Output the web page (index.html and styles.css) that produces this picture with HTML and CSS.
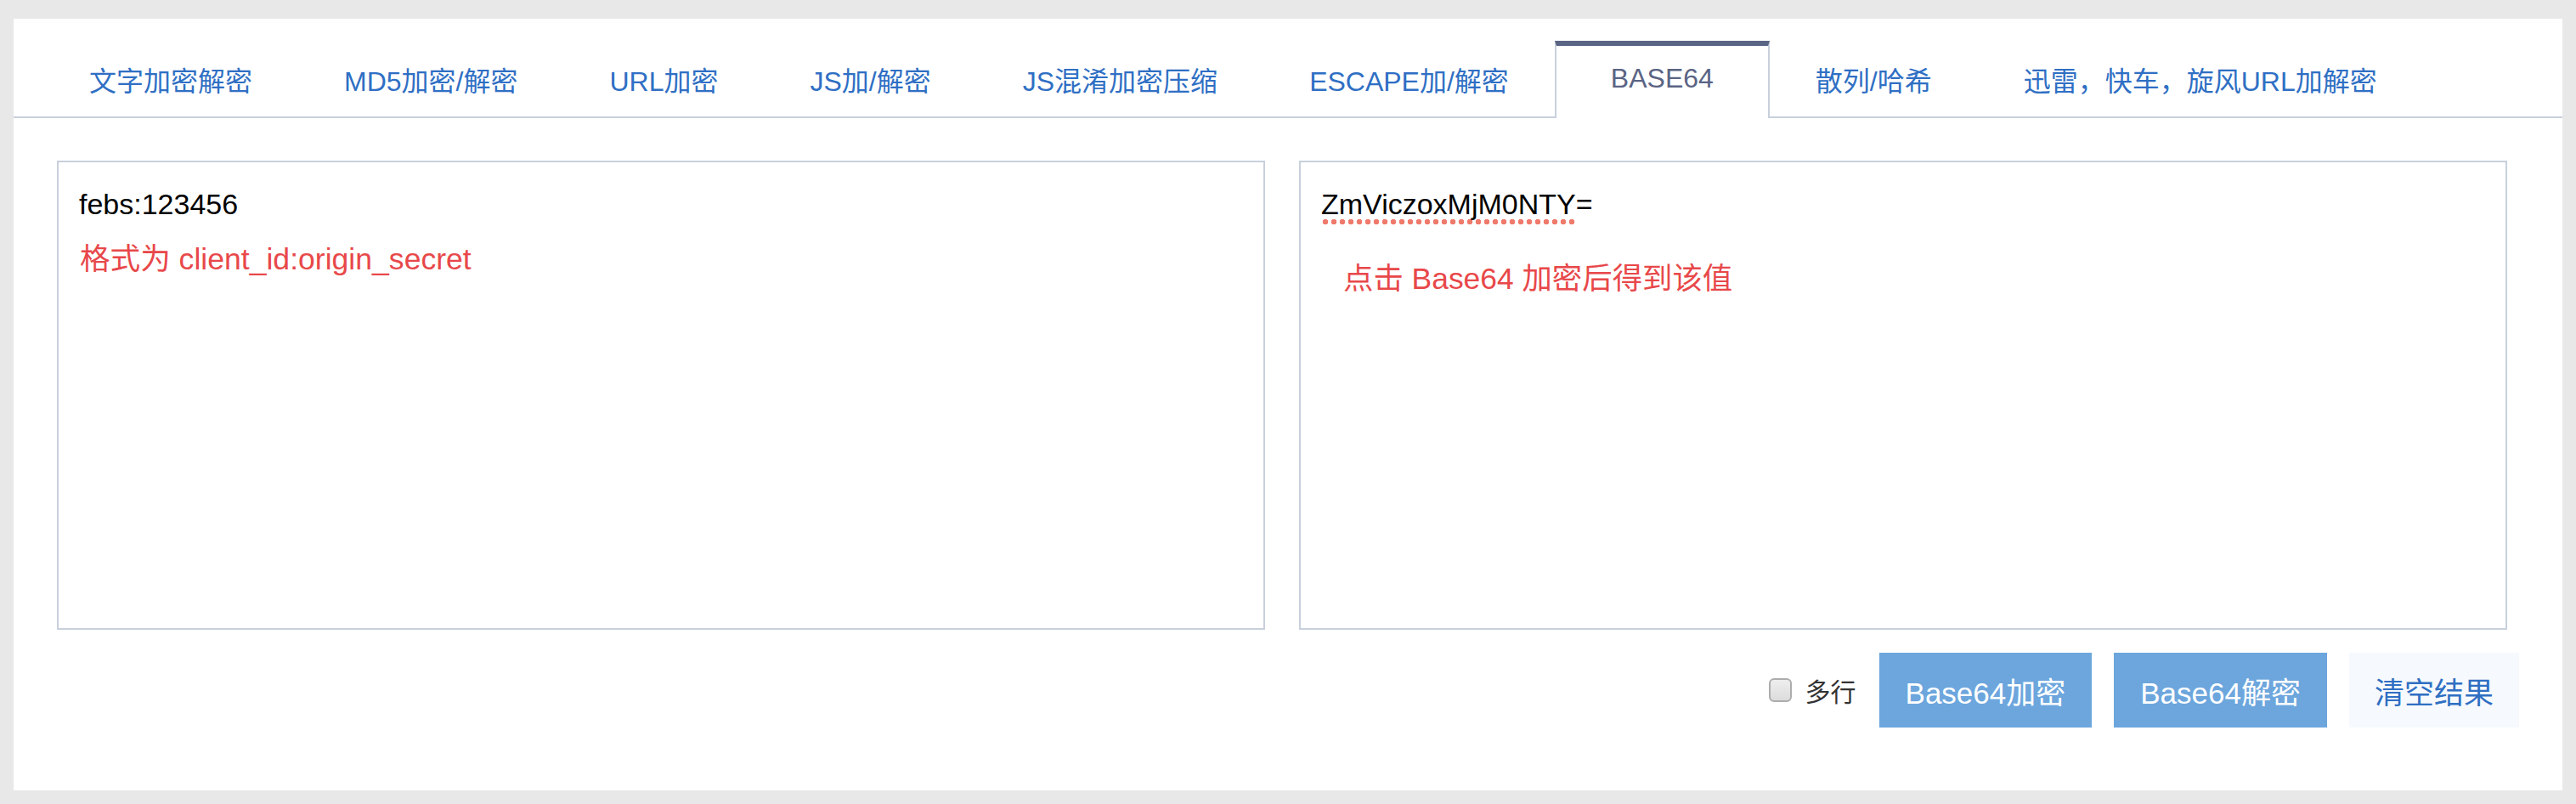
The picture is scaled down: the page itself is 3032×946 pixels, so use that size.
FILE: index.html
```html
<!DOCTYPE html>
<html lang="zh-CN">
<head>
<meta charset="utf-8">
<title>BASE64</title>
<link rel="stylesheet" href="styles.css">
</head>
<body>
<div class="panel">
  <div class="tabbar">
    <div class="tab">文字加密解密</div>
    <div class="tab">MD5加密/解密</div>
    <div class="tab">URL加密</div>
    <div class="tab">JS加/解密</div>
    <div class="tab">JS混淆加密压缩</div>
    <div class="tab">ESCAPE加/解密</div>
    <div class="tab active">BASE64</div>
    <div class="tab">散列/哈希</div>
    <div class="tab">迅雷，快车，旋风URL加解密</div>
  </div>
  <div class="content">
    <div class="boxes">
      <div class="box">
        <div class="line">febs:123456</div>
        <div class="note note-left">格式为 client_id:origin_secret</div>
      </div>
      <div class="box">
        <div class="line"><span class="spell">ZmViczoxMjM0NTY</span>=</div>
        <div class="note note-right">点击 Base64 加密后得到该值</div>
      </div>
    </div>
    <div class="actions">
      <label class="multi"><input type="checkbox" class="check"><span>多行</span></label>
      <button class="btn btn-primary">Base64加密</button>
      <button class="btn btn-primary">Base64解密</button>
      <button class="btn btn-light">清空结果</button>
    </div>
  </div>
</div>
</body>
</html>
```
FILE: styles.css
```css
* { box-sizing: border-box; }
html, body { margin: 0; }
body {
  background: #e8e8e8;
  padding: 22px 16px;
  font-family: "Liberation Sans", "Noto Sans CJK SC", sans-serif;
}
.panel {
  width: 3000px;
  height: 908px;
  background: #ffffff;
}
.tabbar {
  display: flex;
  align-items: flex-start;
  padding: 26px 0 0 35px;
  border-bottom: 2px solid #c8d0dc;
}
.tab {
  height: 89px;
  padding: 0 54px;
  display: flex;
  align-items: center;
  font-size: 32px;
  color: #2f6fc4;
  white-space: nowrap;
}
.tab.active {
  height: 91px;
  margin-bottom: -2px;
  padding: 0 64px 8px;
  background: #ffffff;
  border-top: 6px solid #5a6585;
  border-left: 2px solid #c8d0dc;
  border-right: 2px solid #c8d0dc;
  color: #5a6484;
}
.content {
  width: 2949px;
  padding: 50px 0 0 51px;
}
.boxes {
  display: flex;
  gap: 40px;
}
.box {
  width: 1422px;
  height: 552px;
  border: 2px solid #c8d0dc;
  padding: 24px 24px 0 24px;
}
.line {
  font-size: 34px;
  line-height: 50px;
  color: #000000;
}
.spell {
  padding-bottom: 5px;
  background-image: radial-gradient(circle at 5px 3px, #ef7a6c 0, #ef7a6c 3px, rgba(239,122,108,0) 3.6px);
  background-size: 10px 6px;
  background-repeat: repeat-x;
  background-position: left bottom;
}
.note {
  font-size: 35.6px;
  line-height: 50px;
  color: #e8484a;
}
.note-left { margin-top: 15px; margin-left: 1px; }
.note-right { margin-top: 38px; margin-left: 26px; font-size: 35.4px; }
.actions {
  display: flex;
  justify-content: flex-end;
  align-items: center;
  margin-top: 27px;
  gap: 26px;
}
.multi {
  display: flex;
  align-items: center;
  gap: 16px;
  margin-right: 1px;
  font-size: 30px;
  color: #333333;
}
.check {
  appearance: none;
  -webkit-appearance: none;
  margin: 0;
  width: 27px;
  height: 28px;
  border: 2px solid #adadad;
  border-radius: 6px;
  background: linear-gradient(#eeeeee, #dcdcdc);
}
.btn {
  height: 88px;
  padding: 0 31px;
  border: none;
  font-family: "Liberation Sans", "Noto Sans CJK SC", sans-serif;
  font-size: 35px;
  margin: 0;
}
.btn-primary {
  background: #6ca6dd;
  color: #ffffff;
}
.btn-light {
  padding: 0 30px;
  background: #f6f9fd;
  color: #2f6fc3;
}
```
